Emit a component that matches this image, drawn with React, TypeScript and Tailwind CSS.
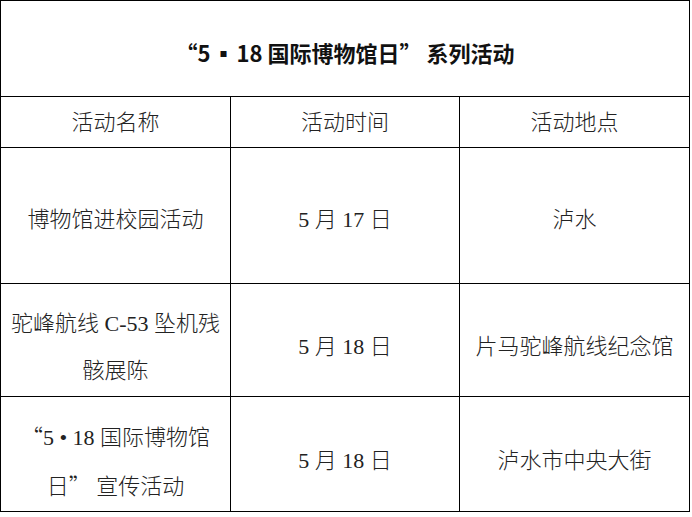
import React from 'react';

interface Activity {
  name: React.ReactNode;
  time: string;
  place: string;
  height: string;
  pad: string;
}

const activities: Activity[] = [
  { name: '博物馆进校园活动', time: '5 月 17 日', place: '泸水', height: 'h-[136px]', pad: 'pt-[7px]' },
  {
    name: (
      <>
        驼峰航线 C-53 坠机残
        <br />
        骸展陈
      </>
    ),
    time: '5 月 18 日',
    place: '片马驼峰航线纪念馆',
    height: 'h-[113px]',
    pad: 'pt-[13px]',
  },
  {
    name: (
      <>
        <span style={{ fontFamily: '"Noto Sans CJK SC", sans-serif' }}>“</span>5 • 18 国际博物馆
        <br />
        日<span style={{ fontFamily: '"Noto Sans CJK SC", sans-serif' }}>”</span> 宣传活动
      </>
    ),
    time: '5 月 18 日',
    place: '泸水市中央大街',
    height: 'h-[114px]',
    pad: 'pt-[13px]',
  },
];

const bodyFont = { fontFamily: '"Liberation Serif", "Noto Sans CJK SC", serif' };

const App = () => {
  return (
    <div className="bg-white w-[692px] h-[517px]">
      <div className="w-[690px] border border-black text-[#222]" style={bodyFont}>
        {/* title */}
        <div
          className="h-[96px] pt-[8px] border-b border-black flex items-center justify-center text-[22px] font-bold text-[#111]"
          style={{ fontFamily: '"Noto Sans CJK SC", sans-serif' }}
        >
          “5<span className="mx-[2px]">▪</span>18 国际博物馆日” 系列活动
        </div>

        {/* header */}
        <div className="grid grid-cols-[230px_229px_229px] h-[51px] border-b border-black text-[22px] font-light">
          <div className="border-r border-black flex items-center justify-center">活动名称</div>
          <div className="border-r border-black flex items-center justify-center">活动时间</div>
          <div className="flex items-center justify-center">活动地点</div>
        </div>

        {activities.map((item, index) => (
          <div
            key={index}
            className={`grid grid-cols-[230px_229px_229px] ${item.height} text-[22px] font-light ${
              index < activities.length - 1 ? 'border-b border-black' : ''
            }`}
          >
            <div className={`border-r border-black flex items-center justify-center text-center leading-[47px] px-1 ${item.pad}`}>
              <span>{item.name}</span>
            </div>
            <div className={`border-r border-black flex items-center justify-center ${item.pad}`}>{item.time}</div>
            <div className={`flex items-center justify-center ${item.pad}`}>{item.place}</div>
          </div>
        ))}
      </div>
    </div>
  );
};

export default App;
